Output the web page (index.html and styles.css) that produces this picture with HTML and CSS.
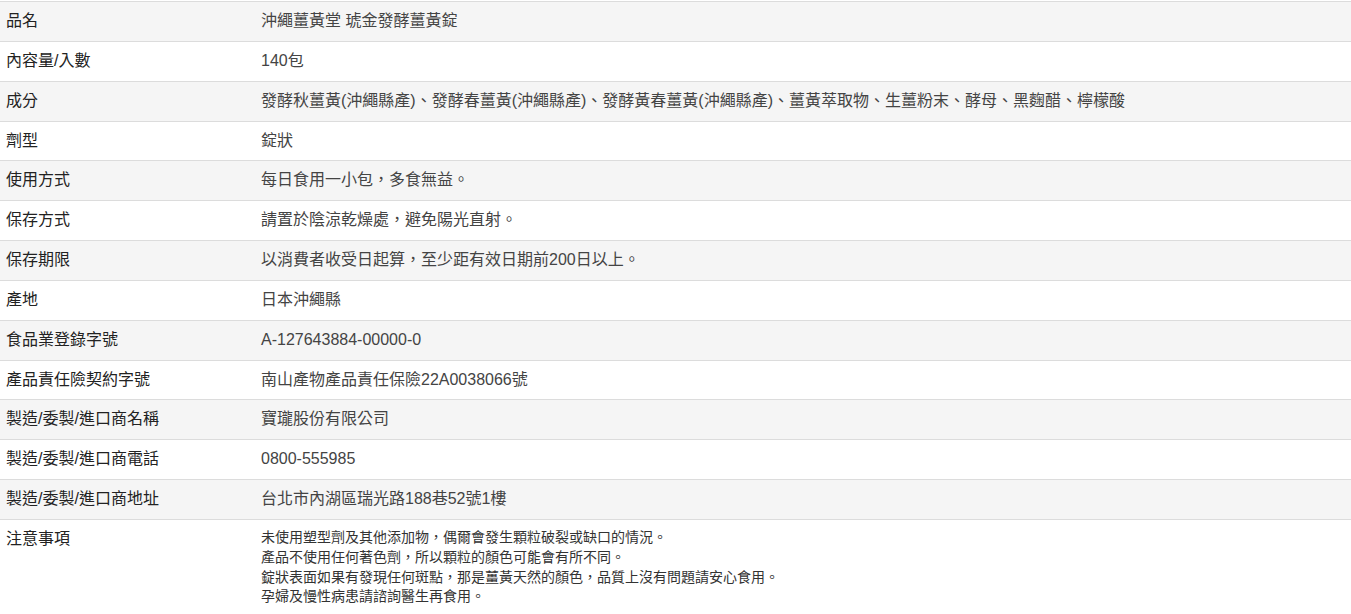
FILE: index.html
```html
<!DOCTYPE html>
<html lang="zh-Hant">
<head>
<meta charset="utf-8">
<title>商品規格</title>
<link rel="stylesheet" href="styles.css">
</head>
<body>
<div class="spec-wrap">
<table class="spec">
  <tbody>
    <tr class="odd"><th>品名</th><td>沖繩薑黃堂 琥金發酵薑黃錠</td></tr>
    <tr><th>內容量/入數</th><td>140包</td></tr>
    <tr class="odd"><th>成分</th><td>發酵秋薑黃(沖繩縣產)、發酵春薑黃(沖繩縣產)、發酵黃春薑黃(沖繩縣產)、薑黃萃取物、生薑粉末、酵母、黑麴醋、檸檬酸</td></tr>
    <tr><th>劑型</th><td>錠狀</td></tr>
    <tr class="odd"><th>使用方式</th><td>每日食用一小包，多食無益。</td></tr>
    <tr><th>保存方式</th><td>請置於陰涼乾燥處，避免陽光直射。</td></tr>
    <tr class="odd"><th>保存期限</th><td>以消費者收受日起算，至少距有效日期前200日以上。</td></tr>
    <tr><th>產地</th><td>日本沖繩縣</td></tr>
    <tr class="odd"><th>食品業登錄字號</th><td>A-127643884-00000-0</td></tr>
    <tr><th>產品責任險契約字號</th><td>南山產物產品責任保險22A0038066號</td></tr>
    <tr class="odd"><th>製造/委製/進口商名稱</th><td>寶瓏股份有限公司</td></tr>
    <tr><th>製造/委製/進口商電話</th><td>0800-555985</td></tr>
    <tr class="odd"><th>製造/委製/進口商地址</th><td>台北市內湖區瑞光路188巷52號1樓</td></tr>
    <tr>
      <th>注意事項</th>
      <td class="notes">
        <p>未使用塑型劑及其他添加物，偶爾會發生顆粒破裂或缺口的情況。</p>
        <p>產品不使用任何著色劑，所以顆粒的顏色可能會有所不同。</p>
        <p>錠狀表面如果有發現任何斑點，那是薑黃天然的顏色，品質上沒有問題請安心食用。</p>
        <p>孕婦及慢性病患請諮詢醫生再食用。</p>
      </td>
    </tr>
  </tbody>
</table>
</div>
</body>
</html>
```

FILE: styles.css
```css
html, body {
  margin: 0;
  padding: 0;
  background: #fff;
}

body {
  font-family: "Liberation Sans", "Noto Sans CJK TC", Arial, sans-serif;
  font-size: 16px;
  color: #333;
}

.spec-wrap {
  padding-top: 1px;
}

.spec {
  width: 100%;
  border-collapse: collapse;
  border-spacing: 0;
}

.spec th,
.spec td {
  text-align: left;
  vertical-align: top;
  padding: 8px 8px 8px 6px;
  line-height: 22.85px;
  border-top: 1px solid #dcdcdc;
}

.spec th {
  width: 239px;
  font-weight: normal;
  color: #222;
}

.spec td {
  color: #444;
  padding-left: 8px;
}

.spec tr.odd th,
.spec tr.odd td {
  background: #f5f5f5;
}

.spec td.notes {
  font-size: 14px;
  line-height: 19.8px;
  color: #333;
}

.spec td.notes p {
  margin: 0;
}
```
